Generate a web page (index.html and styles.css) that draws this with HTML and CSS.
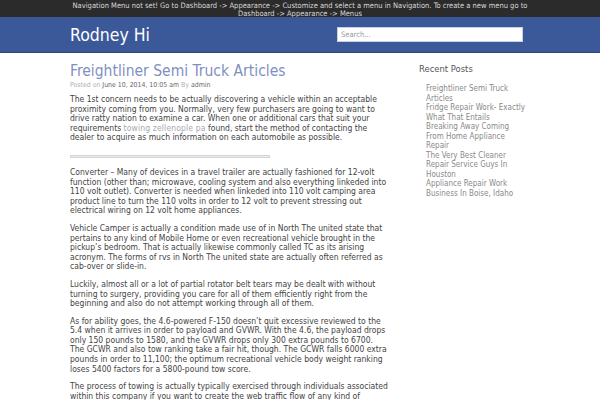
FILE: index.html
```html
<!DOCTYPE html>
<html>
<head>
<meta charset="utf-8">
<link rel="stylesheet" href="styles.css">
</head>
<body>
<div class="topbar"><p class="topbar-text">Navigation Menu not set! Go to Dashboard -&gt; Appearance -&gt; Customize and select a menu in Navigation. To create a new menu go to Dashboard -&gt; Appearance -&gt; Menus</p></div>
<header class="header">
  <div class="header-inner">
    <div class="site-title">Rodney Hi</div>
    <input class="search" type="text" placeholder="Search...">
  </div>
</header>
<div class="page">
  <main class="main">
    <h1 class="post-title">Freightliner Semi Truck Articles</h1>
    <div class="meta"><span class="muted">Posted on</span> June 10, 2014, 10:05 am <span class="muted">By</span> admin</div>
    <p>The 1st concern needs to be actually discovering a vehicle within an acceptable proximity coming from you. Normally, very few purchasers are going to want to drive ratty nation to examine a car. When one or additional cars that suit your requirements <a class="link" href="#">towing zellenople pa</a> found, start the method of contacting the<br>dealer to acquire as much information on each automobile as possible.</p>
    <div class="rule"></div>
    <p>Converter – Many of devices in a travel trailer are actually fashioned for 12-volt function (other than; microwave, cooling system and also everything linkeded into 110 volt outlet). Converter is needed when linkeded into 110 volt camping area product line to turn the 110 volts in order to 12 volt to prevent stressing out electrical wiring on 12 volt home appliances.</p>
    <p>Vehicle Camper is actually a condition made use of in North The united state that pertains to any kind of Mobile Home or even recreational vehicle brought in the pickup’s bedroom. That is actually likewise commonly called TC as its arising acronym. The forms of rvs in North The united state are actually often referred as cab-over or slide-in.</p>
    <p>Luckily, almost all or a lot of partial rotator belt tears may be dealt with without turning to surgery, providing you care for all of them efficiently right from the beginning and also do not attempt working through all of them.</p>
    <p>As for ability goes, the 4.6-powered F-150 doesn’t quit excessive reviewed to the 5.4 when it arrives in order to payload and GVWR. With the 4.6, the payload drops only 150 pounds to 1580, and the GVWR drops only 300 extra pounds to 6700. The&nbsp;GCWR and also tow ranking take a fair hit, though. The GCWR falls 6000 extra pounds in order to 11,100; the optimum recreational vehicle body weight ranking loses 5400 factors for a 5800-pound tow score.</p>
    <p>The process of towing is actually typically exercised through individuals associated within this company if you want to create the web traffic flow of any kind of location easier and also much safer for everybody who travels through it every day.</p>
  </main>
  <aside class="sidebar">
    <h2 class="widget-title">Recent Posts</h2>
    <ul class="recent">
      <li><a href="#">Freightliner Semi Truck Articles</a></li>
      <li><a href="#">Fridge Repair Work- Exactly What That Entails</a></li>
      <li><a href="#">Breaking Away Coming From Home Appliance Repair</a></li>
      <li><a href="#">The Very Best Cleaner Repair Service Guys In Houston</a></li>
      <li><a href="#">Appliance Repair Work Business In Boise, Idaho</a></li>
    </ul>
  </aside>
</div>
</body>
</html>
```
FILE: styles.css
```css
html, body {
  margin: 0;
  padding: 0;
  background: #fff;
}
body {
  font-family: "DejaVu Sans Condensed", "DejaVu Sans", sans-serif;
  font-stretch: condensed;
  color: #444;
}
.topbar {
  background: #2b2b2b;
  height: 17px;
  overflow: hidden;
}
.topbar-text {
  margin: 0 auto;
  width: 480px;
  text-align: center;
  color: #d8d8d8;
  font-size: 7.5px;
  line-height: 8px;
  padding-top: 1.5px;
}
.header {
  background: #3b5998;
  height: 35px;
  border-bottom: 1px solid #2f477a;
}
.header-inner {
  width: 453px;
  margin-left: 70px;
  height: 35px;
  display: flex;
  align-items: center;
  justify-content: space-between;
}
.site-title {
  color: #fff;
  font-size: 17.5px;
  line-height: 20px;
}
.search {
  width: 186px;
  height: 15px;
  box-sizing: border-box;
  border: 1px solid #c9d1e2;
  padding: 0 3px;
  font-family: inherit;
  font-size: 7.5px;
  color: #555;
  margin: 0;
  outline: none;
}
.search::placeholder {
  color: #999;
}
.page {
  display: flex;
  width: 453px;
  margin-left: 70px;
  justify-content: space-between;
}
.main {
  width: 321px;
  font-size: 8.5px;
  line-height: 9.6px;
}
.post-title {
  margin: 9px 0 0;
  font-weight: normal;
  font-size: 15.5px;
  line-height: 19px;
  color: #7f90c0;
}
.meta {
  font-size: 6.9px;
  line-height: 9px;
  color: #666;
}
.muted {
  color: #b0b0b0;
}
.main p {
  margin: 5px 0 8px;
}
.link {
  color: #a4a9b4;
  text-decoration: none;
  letter-spacing: 0.15px;
}
.rule {
  width: 200px;
  height: 3px;
  box-sizing: border-box;
  border: 1px solid #d4d4d4;
  background: #ededed;
  margin: 12px 0 10px;
}
.sidebar {
  width: 104px;
}
.widget-title {
  margin: 10px 0 0;
  font-weight: normal;
  font-size: 9.4px;
  line-height: 12px;
  color: #555;
}
.recent {
  list-style: none;
  margin: 9px 0 0;
  padding: 0 0 0 7px;
  width: 102px;
  font-size: 8px;
  line-height: 9.5px;
}
.recent a {
  color: #8a8a8a;
  text-decoration: none;
}
```
